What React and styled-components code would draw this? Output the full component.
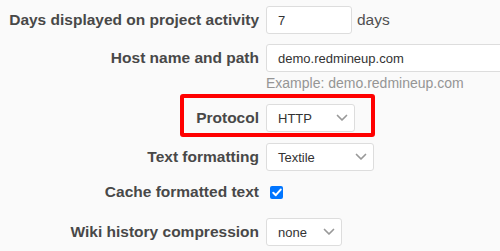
import styled, { createGlobalStyle } from "styled-components";

const Global = createGlobalStyle`
    body {
        margin: 0;
        background-color: #fafafa;
        font-family: "Liberation Sans", Arial, sans-serif;
    }
`

function Chevron() {
    return (
        <svg width="12" height="8" viewBox="0 0 12 8">
            <path d="M1.5 1.5 L6 6 L10.5 1.5" fill="none" stroke="#999" strokeWidth="1.7" strokeLinecap="round" strokeLinejoin="round"/>
        </svg>
    );
}

export default function App() {
    return (
        <>
            <Global />
            <Form>
                <Row>
                    <Label>Days displayed on project activity</Label>
                    <Field>
                        <Input width={86}>7</Input>
                        <Unit>days</Unit>
                    </Field>
                </Row>
                <Row top={10}>
                    <Label>Host name and path</Label>
                    <Column>
                        <Input width={260}>demo.redmineup.com</Input>
                        <Hint>Example: demo.redmineup.com</Hint>
                    </Column>
                </Row>
                <Row top={12}>
                    <Highlight />
                    <Label>Protocol</Label>
                    <Select width={89}>
                        HTTP
                        <Chevron />
                    </Select>
                </Row>
                <Row top={11}>
                    <Label>Text formatting</Label>
                    <Select width={108}>
                        Textile
                        <Chevron />
                    </Select>
                </Row>
                <Row top={7}>
                    <Label>Cache formatted text</Label>
                    <Check>
                        <svg width="10" height="9" viewBox="0 0 10 9">
                            <path d="M1.3 4.8 L3.8 7.2 L8.7 1.6" fill="none" stroke="#fff" strokeWidth="2" strokeLinecap="round" strokeLinejoin="round"/>
                        </svg>
                    </Check>
                </Row>
                <Row top={12}>
                    <Label>Wiki history compression</Label>
                    <Select width={76}>
                        none
                        <Chevron />
                    </Select>
                </Row>
            </Form>
        </>
    );
}

const Form = styled.div`
    display: flex;
    flex-direction: column;
    padding-top: 6px;
    width: 500px;
    overflow: hidden;
`
const Row = styled.div`
    position: relative;
    display: flex;
    align-items: flex-start;
    gap: 7px;
    margin-top: ${(props) => props.top || 0}px;
    min-height: 28px;
`
const Label = styled.div`
    width: 259px;
    flex-shrink: 0;
    text-align: right;
    font-weight: 700;
    font-size: 15.5px;
    line-height: 28px;
    color: #484848;
    white-space: nowrap;
`
const Field = styled.div`
    display: flex;
    align-items: center;
    gap: 5px;
`
const Column = styled.div`
    display: flex;
    flex-direction: column;
`
const Input = styled.div`
    box-sizing: border-box;
    width: ${(props) => props.width}px;
    height: 28px;
    padding: 0 11px;
    display: flex;
    align-items: center;
    background-color: #fff;
    border: 1px solid #dddddd;
    border-radius: 3px;
    font-size: 13px;
    color: #333;
    white-space: nowrap;
`
const Unit = styled.span`
    font-size: 15.5px;
    color: #505050;
`
const Hint = styled.div`
    margin-top: 3px;
    font-size: 14px;
    line-height: 17px;
    color: #959595;
    white-space: nowrap;
`
const Select = styled.div`
    box-sizing: border-box;
    width: ${(props) => props.width}px;
    height: 28px;
    padding: 0 6px 0 11px;
    display: flex;
    align-items: center;
    justify-content: space-between;
    background-color: #fff;
    border: 1px solid #dddddd;
    border-radius: 3px;
    font-size: 13px;
    color: #333;
`
const Check = styled.div`
    margin: 8px 0 0 4px;
    width: 13px;
    height: 13px;
    border-radius: 2px;
    background-color: #0075ff;
    display: flex;
    align-items: center;
    justify-content: center;
`
const Highlight = styled.div`
    position: absolute;
    left: 180px;
    top: -10px;
    width: 195px;
    height: 43px;
    box-sizing: border-box;
    border: 4px solid #ff0000;
    border-radius: 3px;
`
